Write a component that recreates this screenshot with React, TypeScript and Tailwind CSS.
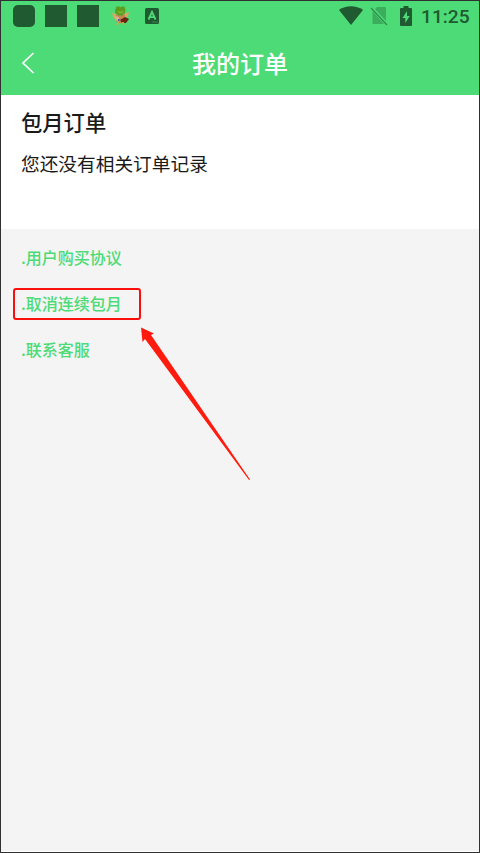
interface LinkItem {
  label: string;
  marked?: boolean;
}

const links: LinkItem[] = [
  { label: '.用户购买协议' },
  { label: '.取消连续包月', marked: true },
  { label: '.联系客服' },
];

function FrogIcon() {
  return (
    <svg width="20" height="22" viewBox="0 0 20 22">
      <path d="M1 7.500l2 1 4 2v3l-3 1-2-3zM18 7l-3 1-4 3 2 3 4-3z" fill="#dda562" />
      <path d="M5 10h9v6l-2 2H7l-2-2z" fill="#c48750" />
      <path d="M4 11l4 1v5l-3-2z" fill="#ddb08c" />
      <path d="M9 15l5-3 4 2-3 4-4 0z" fill="#6b2412" />
      <path d="M6 17l2 0-1 3H5l1-2zM11 17l2 0 0 2 1 1h-2z" fill="#d3a93e" />
      <path d="M5.500 1.500h3l1 1 1-1h3l1 4-1 3-2 2h-4l-3-2-.5-3z" fill="#5c9c1f" />
      <path d="M6 6h7l-1 2.500H8z" fill="#78ae2c" />
      <path d="M7 14h1.500v2H7z" fill="#3b5aa0" />
    </svg>
  );
}

function StatusBar() {
  return (
    <div className="flex h-[30px] items-center justify-between pl-3 pr-[10px] text-[#205a31]">
      <div className="flex items-center">
        <div className="h-[22px] w-[22px] rounded-[5px] bg-[#205a31]" />
        <div className="ml-[10px] h-[22px] w-[22px] bg-[#205a31]" />
        <div className="ml-[10px] h-[22px] w-[22px] bg-[#205a31]" />
        <div className="ml-[12px]">
          <FrogIcon />
        </div>
        <svg className="ml-[14px]" width="14" height="16" viewBox="0 0 14 16">
          <rect width="14" height="16" rx="1.5" fill="#205a31" />
          <path d="M3.5 11.5L7 4l3.5 7.5M4.8 9.2h4.4" fill="none" stroke="#4ddb77" strokeWidth="1.8" />
          <path d="M7.5 14h1M9.5 14h1M11.5 14h1" stroke="#4ddb77" strokeWidth="0.8" />
        </svg>
      </div>
      <div className="flex items-center">
        <svg width="24" height="19" viewBox="0 0 24 19">
          <path d="M0 4C7-1 17-1 24 4L12 19z" fill="currentColor" />
        </svg>
        <svg className="ml-[7px]" width="18" height="20" viewBox="0 0 18 20">
          <path d="M7 1h8a1 1 0 0 1 1 1v13L5 3zM2.500 5.300L14 18H3.500a1 1 0 0 1-1-1z" fill="#3cad5d" />
          <path d="M1 2l16 17" stroke="#2e8b4a" strokeWidth="1.2" />
        </svg>
        <svg className="ml-[12px]" width="12" height="20" viewBox="0 0 12 20">
          <path d="M3.500 0h5v2H11a1 1 0 0 1 1 1v16a1 1 0 0 1-1 1H1a1 1 0 0 1-1-1V3a1 1 0 0 1 1-1h2.500z" fill="currentColor" />
          <path d="M7 5L2.500 12H5.300v5L9.700 10H7z" fill="#4ddb77" />
        </svg>
        <span className="ml-[9px] w-[48px] whitespace-nowrap pt-0.5 font-[Roboto] text-[19.200px] leading-none font-medium">
          11:25
        </span>
      </div>
    </div>
  );
}

function Header() {
  return (
    <header className="h-[94px] bg-[#4ddb77]">
      <StatusBar />
      <div className="grid h-[63px] grid-cols-[60px_1fr_60px] items-center text-white">
        <svg className="ml-[21px]" width="13" height="22" viewBox="0 0 13 22">
          <path d="M11.500 1L1 11l10.500 10" fill="none" stroke="currentColor" strokeWidth="1.600" />
        </svg>
        <h1 className="text-center text-[24px] leading-8 font-medium">我的订单</h1>
      </div>
    </header>
  );
}

export default function App() {
  return (
    <div className="relative flex h-[853px] w-[480px] flex-col overflow-hidden border border-[#303033] bg-[#f4f4f4] font-['Noto_Sans_CJK_SC',sans-serif]">
      <Header />
      <section className="h-[134px] bg-white px-[20px] pt-[11px] text-[#1a1a1a]">
        <h2 className="text-[21.3px] leading-8 font-medium">包月订单</h2>
        <p className="mt-[9px] text-[18.7px] leading-8">您还没有相关订单记录</p>
      </section>
      <nav className="flex flex-1 flex-col items-start gap-[14px] border-b border-white pt-[13px] pl-3">
        {links.map((l) => (
          <a
            key={l.label}
            className={
              l.marked
                ? 'flex h-8 w-[128px] items-center rounded-[3px] border-2 border-[#fb0f0c] pb-0.5 pl-[6px] text-[16px] font-medium text-[#4ddb77]'
                : 'flex h-8 items-center pb-0.5 pl-[8px] text-[16px] font-medium text-[#4ddb77]'
            }
          >
            {l.label}
          </a>
        ))}
      </nav>
      <svg className="absolute top-[326px] left-[139px]" width="112" height="156" viewBox="140 327 112 156">
        <path d="M141 327.500L154 333.500L151 335L250 479.500L249 480L145 339L142.500 342z" fill="#ff1c0e" />
      </svg>
    </div>
  );
}
